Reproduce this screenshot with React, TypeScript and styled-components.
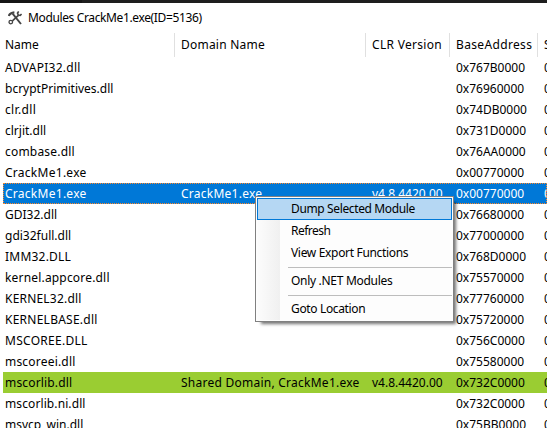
import React from "react";
import styled, { createGlobalStyle } from "styled-components";

const GlobalStyle = createGlobalStyle`
  * { box-sizing: border-box; }
  html, body { margin: 0; padding: 0; overflow: hidden; background: #fff; }
`;

const Desktop = styled.div`
  position: relative;
  width: 547px;
  height: 428px;
  overflow: hidden;
  display: flex;
  flex-direction: column;
  background: #fff;
  color: #000;
  font: 12px/21px "Noto Sans", "Open Sans", sans-serif;
  white-space: pre;
  cursor: default;
`;

const BackdropStrip = styled.div`
  flex: none;
  height: 3px;
  background: linear-gradient(90deg, #151515 82px, #1e1e1e 82px);
`;

const TitleBar = styled.header`
  flex: none;
  display: flex;
  align-items: center;
  gap: 6px;
  height: 30px;
  padding: 0 0 1px 8px;
`;

const Text = styled.span<{ $track?: number }>`
  letter-spacing: ${(p) => p.$track ?? 0}px;
`;

const Grid = styled.div`
  display: grid;
  grid-template-columns: 172px 191px 84px 88px 60px;
`;

const HeaderRow = styled(Grid)`
  flex: none;
  height: 24px;
  padding-left: 3px;
`;

const HeaderCell = styled.div`
  padding-left: 2px;
  line-height: 23px;
  border-right: 1px solid #e0e0e0;
  & + & { padding-left: 6px; }
`;

const List = styled.main`
  flex: none;
  padding-left: 3px;
`;

type Tone = "plain" | "selected" | "managed";

const Row = styled(Grid)<{ $tone: Tone }>`
  height: 21px;
  color: ${(p) => (p.$tone === "selected" ? "#fff" : "#000")};
  background: ${(p) =>
    p.$tone === "selected" ? "#0078d7" : p.$tone === "managed" ? "#9acd32" : "transparent"};
  outline: ${(p) => (p.$tone === "selected" ? "1px dotted #ff8728" : "none")};
  outline-offset: -1px;
`;

const Cell = styled.div`
  padding-left: 2px;
  & + & { padding-left: 6px; }
`;

const Menu = styled.nav`
  position: absolute;
  left: 255px;
  top: 196px;
  width: 199px;
  height: 126px;
  padding: 1px;
  border: 1px solid #808080;
  background: linear-gradient(90deg, #fcfcfc, #f0f0f0) 1px 1px / 23px 122px no-repeat #fdfdfd;
  box-shadow: 4px 4px 3px -2px rgba(0, 0, 0, 0.55);
`;

const MenuItem = styled.div<{ $active?: boolean }>`
  height: 22px;
  padding-left: 33px;
  line-height: 20px;
  border: 1px solid ${(p) => (p.$active ? "#0078d7" : "transparent")};
  background: ${(p) => (p.$active ? "#b5d7f3" : "transparent")};
`;

const Separator = styled.div`
  height: 1px;
  margin: 3px 0 2px 31px;
  background: #bdbdbd;
`;

const ToolsIcon = () => (
  <svg width="14" height="14" viewBox="0 0 14 14" fill="none" stroke="#444">
    <path d="M.8 5C1.4 3 3 1.7 6.4 1.4" strokeWidth="2.2" />
    <path d="M4.6 2.6L13 13" strokeWidth="1.9" />
    <path d="M10.4 4.3L4.4 9.8" strokeWidth="1.7" />
    <path d="M10.7 .4L9.5 2L10.3 4L12.2 4.3L13.6 3" strokeWidth="1.6" />
    <circle cx="2.8" cy="11.1" r="1.8" strokeWidth="1.3" />
  </svg>
);

interface Module {
  name: string;
  base: string;
  track?: number;
  domain?: string;
  clr?: string;
  tone?: Tone;
}

const modules: Module[] = [
  { name: "ADVAPI32.dll", track: 0.26, base: "0x767B0000" },
  { name: "bcryptPrimitives.dll", base: "0x76960000" },
  { name: "clr.dll", track: 0.35, base: "0x74DB0000" },
  { name: "clrjit.dll", track: 0.0, base: "0x731D0000" },
  { name: "combase.dll", track: 0.2, base: "0x76AA0000" },
  { name: "CrackMe1.exe", track: 0.27, base: "0x00770000" },
  { name: "CrackMe1.exe", track: 0.27, base: "0x00770000", domain: "CrackMe1.exe", clr: "v4.8.4420.00", tone: "selected" },
  { name: "GDI32.dll", base: "0x76680000" },
  { name: "gdi32full.dll", base: "0x77000000" },
  { name: "IMM32.DLL", track: 0.22, base: "0x768D0000" },
  { name: "kernel.appcore.dll", track: 0.18, base: "0x75570000" },
  { name: "KERNEL32.dll", track: 0.2, base: "0x77760000" },
  { name: "KERNELBASE.dll", track: 0.25, base: "0x75720000" },
  { name: "MSCOREE.DLL", track: 0.28, base: "0x756C0000" },
  { name: "mscoreei.dll", track: 0.2, base: "0x75580000" },
  { name: "mscorlib.dll", track: 0.16, base: "0x732C0000", domain: "Shared Domain, CrackMe1.exe", clr: "v4.8.4420.00", tone: "managed" },
  { name: "mscorlib.ni.dll", track: 0.1, base: "0x732C0000" },
  { name: "msvcp_win.dll", base: "0x75BB0000" },
];

export default function App() {
  return (
    <>
      <GlobalStyle />
      <Desktop>
        <BackdropStrip />
        <TitleBar>
          <ToolsIcon />
          <Text $track={-0.37}>Modules CrackMe1.exe(ID=5136)</Text>
        </TitleBar>
        <HeaderRow>
          <HeaderCell><Text>Name</Text></HeaderCell>
          <HeaderCell><Text $track={0.22}>Domain Name</Text></HeaderCell>
          <HeaderCell><Text $track={0.3}>CLR Version</Text></HeaderCell>
          <HeaderCell><Text $track={0.35}>BaseAddress</Text></HeaderCell>
          <HeaderCell><Text>S</Text></HeaderCell>
        </HeaderRow>
        <List>
          {modules.map((m, i) => (
            <Row key={i} $tone={m.tone ?? "plain"}>
              <Cell><Text $track={m.track}>{m.name}</Text></Cell>
              <Cell><Text $track={0.25}>{m.domain}</Text></Cell>
              <Cell><Text>{m.clr}</Text></Cell>
              <Cell><Text>{m.base}</Text></Cell>
              <Cell><Text>0</Text></Cell>
            </Row>
          ))}
        </List>
        <Menu>
          <MenuItem $active><Text $track={-0.37}>Dump Selected Module</Text></MenuItem>
          <MenuItem><Text $track={-0.5}>Refresh</Text></MenuItem>
          <MenuItem><Text $track={-0.33}>View Export Functions</Text></MenuItem>
          <Separator />
          <MenuItem><Text $track={-0.3}>Only .NET Modules</Text></MenuItem>
          <Separator />
          <MenuItem><Text $track={-0.35}>Goto Location</Text></MenuItem>
        </Menu>
      </Desktop>
    </>
  );
}
